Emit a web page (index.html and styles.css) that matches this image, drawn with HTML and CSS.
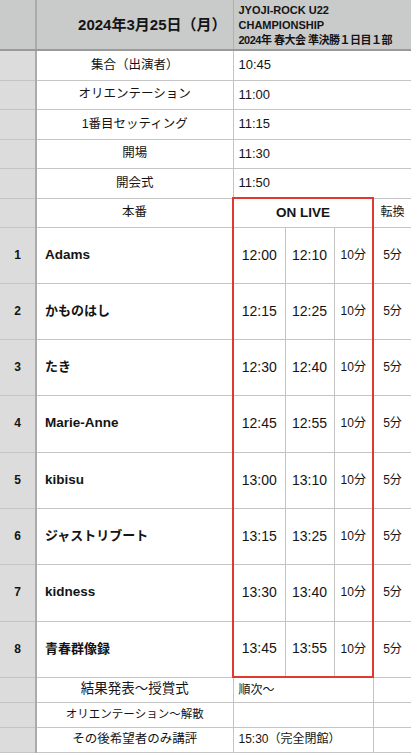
FILE: index.html
```html
<!DOCTYPE html>
<html lang="ja">
<head>
<meta charset="utf-8">
<title>JYOJI-ROCK U22 タイムテーブル</title>
<link rel="stylesheet" href="styles.css">
</head>
<body>
<table class="sheet">
  <colgroup>
    <col class="c-idx">
    <col class="c-name">
    <col class="c-t1">
    <col class="c-t2">
    <col class="c-dur">
    <col class="c-tr">
  </colgroup>
  <tbody>
    <tr class="r-head">
      <td class="idx head"></td>
      <td class="head date">2024年3月25日（月）</td>
      <td class="head event" colspan="4">JYOJI-ROCK U22<br>CHAMPIONSHIP<br><span class="event-sub">2024年 春大会 準決勝１日目１部</span></td>
    </tr>
    <tr class="r-a"><td class="idx"></td><td class="label">集合（出演者）</td><td class="val" colspan="4">10:45</td></tr>
    <tr class="r-b"><td class="idx"></td><td class="label">オリエンテーション</td><td class="val" colspan="4">11:00</td></tr>
    <tr class="r-a"><td class="idx"></td><td class="label">1番目セッティング</td><td class="val" colspan="4">11:15</td></tr>
    <tr class="r-b"><td class="idx"></td><td class="label">開場</td><td class="val" colspan="4">11:30</td></tr>
    <tr class="r-a"><td class="idx"></td><td class="label">開会式</td><td class="val" colspan="4">11:50</td></tr>
    <tr class="r-b">
      <td class="idx"></td><td class="label">本番</td>
      <td class="onlive" colspan="3">ON LIVE</td>
      <td class="tr">転換</td>
    </tr>
    <tr class="r-p"><td class="idx num">1</td><td class="band">Adams</td><td class="t1">12:00</td><td class="t2">12:10</td><td class="dur">10分</td><td class="tr">5分</td></tr>
    <tr class="r-p"><td class="idx num">2</td><td class="band jp">かものはし</td><td class="t1">12:15</td><td class="t2">12:25</td><td class="dur">10分</td><td class="tr">5分</td></tr>
    <tr class="r-p"><td class="idx num">3</td><td class="band jp">たき</td><td class="t1">12:30</td><td class="t2">12:40</td><td class="dur">10分</td><td class="tr">5分</td></tr>
    <tr class="r-q"><td class="idx num">4</td><td class="band">Marie-Anne</td><td class="t1">12:45</td><td class="t2">12:55</td><td class="dur">10分</td><td class="tr">5分</td></tr>
    <tr class="r-p"><td class="idx num">5</td><td class="band">kibisu</td><td class="t1">13:00</td><td class="t2">13:10</td><td class="dur">10分</td><td class="tr">5分</td></tr>
    <tr class="r-p"><td class="idx num">6</td><td class="band jp">ジャストリブート</td><td class="t1">13:15</td><td class="t2">13:25</td><td class="dur">10分</td><td class="tr">5分</td></tr>
    <tr class="r-q"><td class="idx num">7</td><td class="band">kidness</td><td class="t1">13:30</td><td class="t2">13:40</td><td class="dur">10分</td><td class="tr">5分</td></tr>
    <tr class="r-p last"><td class="idx num">8</td><td class="band jp">青春群像録</td><td class="t1">13:45</td><td class="t2">13:55</td><td class="dur">10分</td><td class="tr">5分</td></tr>
    <tr class="r-s"><td class="idx"></td><td class="label big">結果発表〜授賞式</td><td class="val small" colspan="3">順次〜</td><td class="tr"></td></tr>
    <tr class="r-s"><td class="idx"></td><td class="label tiny">オリエンテーション〜解散</td><td class="val" colspan="3"></td><td class="tr"></td></tr>
    <tr class="r-s"><td class="idx"></td><td class="label">その後希望者のみ講評</td><td class="val small" colspan="3">15:30（完全閉館）</td><td class="tr"></td></tr>
  </tbody>
</table>
</body>
</html>
```

FILE: styles.css
```css
html, body {
  margin: 0;
  padding: 0;
  background: #ffffff;
}

body {
  font-family: "Liberation Sans", "Noto Sans CJK JP", sans-serif;
  color: #141414;
}

.sheet {
  width: 411px;
  table-layout: fixed;
  border-collapse: collapse;
  border-spacing: 0;
  font-size: 12px;
  line-height: 1.2;
}

.c-idx { width: 36px; }
.c-name { width: 197px; }
.c-t1 { width: 52px; }
.c-t2 { width: 49px; }
.c-dur { width: 39px; }
.c-tr { width: 38px; }

td {
  padding: 0;
  border: 1px solid #c4c4c4;
  white-space: nowrap;
  overflow: hidden;
  vertical-align: middle;
}

td:first-child { border-left: none; }
td:last-child { border-right: none; }
.r-head td { border-top: none; }

.r-head { height: 50px; }
.r-a { height: 30px; }
.r-b { height: 29px; }
.r-p { height: 56px; }
.r-q { height: 57px; }
.r-s { height: 25px; }

.idx {
  background: #dcdcdc;
  border-right: 2px solid #ababab;
  text-align: center;
}

.num {
  font-weight: bold;
  font-size: 12px;
}

.head {
  background: #c9caca;
  border-bottom: 2px solid #9a9a9a;
}

.date {
  font-weight: bold;
  font-size: 15px;
  text-align: right;
  padding-right: 6px;
  border-right: 1px solid #b0b0b0;
}

.event {
  font-weight: bold;
  font-size: 11px;
  line-height: 15px;
  padding-left: 5px;
  padding-top: 3px;
  vertical-align: top;
}

.event-sub {
  letter-spacing: -0.5px;
}

.label {
  text-align: center;
  font-size: 12.5px;
}

.label.big { font-size: 13.5px; }
.label.tiny { font-size: 11.5px; }

.val {
  padding-left: 5px;
  font-size: 13px;
}

.val.small { font-size: 12px; }

.band {
  font-weight: bold;
  font-size: 13.5px;
  padding-left: 8px;
}

.band.jp { font-size: 13px; }

.onlive {
  text-align: center;
  font-weight: bold;
  font-size: 13.5px;
  border: 2px solid #e03a30;
  border-bottom: 1px solid #c4c4c4;
}

.t1, .t2 {
  text-align: center;
  font-size: 14px;
}

.t1 { border-left: 2px solid #e03a30; }

.dur {
  text-align: center;
  font-size: 12px;
  border-right: 2px solid #e03a30;
}

.tr {
  text-align: center;
  font-size: 12px;
}

.last .t1, .last .t2, .last .dur {
  border-bottom: 2px solid #e03a30;
}
```
